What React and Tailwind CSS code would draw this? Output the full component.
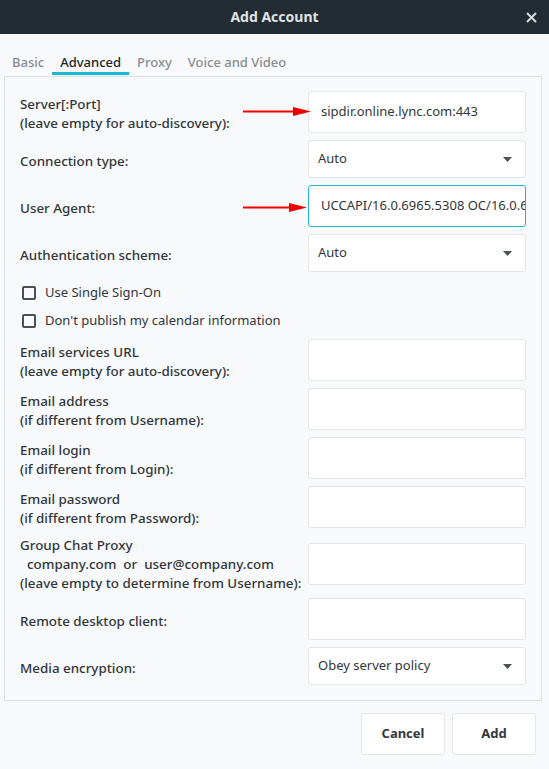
import React from 'react';

// Colours
const TEXT = 'text-[#31363b]';

function Field({ children, focused = false }) {
  return (
    <div
      className={`h-full w-full bg-white rounded-[3px] border ${
        focused ? 'border-[#1fb6d3]' : 'border-[#e3e5e7]'
      } flex items-center pl-[12px] overflow-hidden whitespace-nowrap ${TEXT}`}
    >
      {children}
    </div>
  );
}

function Select({ value }) {
  return (
    <div className={`h-full w-full bg-white rounded-[3px] border border-[#e3e5e7] flex items-center justify-between pl-[9px] pr-[13px] ${TEXT}`}>
      <span>{value}</span>
      <svg width="9" height="5" viewBox="0 0 9 5">
        <polygon points="0,0 9,0 4.5,5" fill="#4d5257" />
      </svg>
    </div>
  );
}

function InputRow({ label, height = 42, rowHeight, tall = false, children }) {
  return (
    <div className="grid grid-cols-[1fr_218px] items-center" style={{ height: rowHeight || height }}>
      <div className={`leading-[19px] ${tall ? 'pt-[1px]' : 'pt-[4px]'} text-[13.4px] font-medium ${TEXT}`}>{label}</div>
      <div style={{ height }}>{children}</div>
    </div>
  );
}

function Check({ label }) {
  return (
    <div className="flex items-center h-[21px] pl-[2px] gap-[9px]">
      <div className="w-[14px] h-[14px] border-2 border-[#4a5056] rounded-[2px]" />
      <span className={TEXT}>{label}</span>
    </div>
  );
}

export default function App() {
  const tabs = ['Basic', 'Advanced', 'Proxy', 'Voice and Video'];

  return (
    <div className="relative w-[549px] h-[769px] bg-[#f8f9fa] font-['Noto_Sans',sans-serif] text-[13px] overflow-hidden">
      {/* Title bar */}
      <div className="h-[34px] bg-[#232c32] flex items-center justify-center relative">
        <span className="text-[#dfe3e6] font-bold text-[14px] -mt-[1px]">Add Account</span>
        <svg className="absolute right-[12px] top-[12px]" width="11" height="11" viewBox="0 0 11 11">
          <path d="M1 1 L10 10 M10 1 L1 10" stroke="#d6dadd" strokeWidth="2" />
        </svg>
      </div>

      {/* Tabs */}
      <div className="h-[42px] flex items-end pl-[4px] pb-[1px]">
        {tabs.map((t) => (
          <div
            key={t}
            className={`px-[8px] leading-[18px] pb-[1px] border-b-[3px] font-medium ${
              t === 'Advanced' ? 'border-[#1ab8d5] text-[#232629]' : 'border-transparent text-[#878d92]'
            }`}
          >
            {t}
          </div>
        ))}
      </div>

      {/* Panel */}
      <div className="ml-[4px] mr-[7px] border border-[#dee1e4] pt-[14px] pb-[15px] pl-[15px] pr-[15px] flex flex-col gap-[7px]">
        <InputRow label={<>Server[:Port]<br />(leave empty for auto-discovery):</>}>
          <Field>sipdir.online.lync.com:443</Field>
        </InputRow>
        <InputRow label="Connection type:" height={38}>
          <Select value="Auto" />
        </InputRow>
        <InputRow label="User Agent:">
          <Field focused>UCCAPI/16.0.6965.5308 OC/16.0.6965.2058</Field>
        </InputRow>
        <InputRow label="Authentication scheme:" height={38}>
          <Select value="Auto" />
        </InputRow>

        <div className="mt-[3px]">
          <Check label="Use Single Sign-On" />
        </div>
        <Check label="Don't publish my calendar information" />

        <div className="mt-[1px]">
          <InputRow label={<>Email services URL<br />(leave empty for auto-discovery):</>}>
            <Field />
          </InputRow>
        </div>
        <InputRow label={<>Email address<br />(if different from Username):</>}>
          <Field />
        </InputRow>
        <InputRow label={<>Email login<br />(if different from Login):</>}>
          <Field />
        </InputRow>
        <InputRow label={<>Email password<br />(if different from Password):</>}>
          <Field />
        </InputRow>
        <InputRow
          rowHeight={56}
          tall
          label={
            <>
              Group Chat Proxy
              <br />
              <span className="whitespace-pre">{'  company.com  or  user@company.com'}</span>
              <br />
              (leave empty to determine from Username):
            </>
          }
        >
          <Field />
        </InputRow>
        <InputRow label="Remote desktop client:">
          <Field />
        </InputRow>
        <InputRow label="Media encryption:" height={38}>
          <Select value="Obey server policy" />
        </InputRow>
      </div>

      {/* Buttons */}
      <div className="flex justify-end gap-[7px] pr-[13px] pt-[12px]">
        {['Cancel', 'Add'].map((b) => (
          <div
            key={b}
            className={`w-[84px] h-[42px] bg-white border border-[#e3e5e7] rounded-[3px] flex items-center justify-center font-bold ${TEXT}`}
          >
            {b}
          </div>
        ))}
      </div>

      {/* Red annotation arrows */}
      <svg className="absolute left-0 top-0 pointer-events-none" width="549" height="769">
        <line x1="243" y1="111.5" x2="295" y2="111.5" stroke="#f00000" strokeWidth="2" />
        <polygon points="293,107 311,111.5 293,116" fill="#f00000" />
        <line x1="243" y1="207.5" x2="291" y2="207.5" stroke="#f00000" strokeWidth="2" />
        <polygon points="289,203 307,207.5 289,212" fill="#f00000" />
      </svg>
    </div>
  );
}
